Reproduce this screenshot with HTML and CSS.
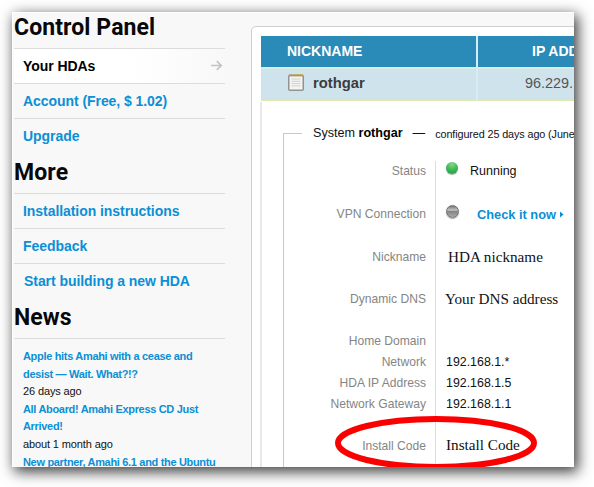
FILE: index.html
```html
<!DOCTYPE html>
<html lang="en">
<head>
<meta charset="utf-8">
<title>Control Panel</title>
<link rel="stylesheet" href="styles.css">
</head>
<body>
<div class="window">
  <aside class="sidebar">
    <h2>Control Panel</h2>
    <ul class="menu">
      <li class="current"><span>Your HDAs</span>
        <svg width="13" height="11" viewBox="0 0 13 11"><path d="M1 5.5h10M6.8 1.2l4.4 4.3-4.4 4.3" fill="none" stroke="#c3c3c3" stroke-width="1.7"/></svg></li>
      <li><a>Account (Free, $ 1.02)</a></li>
      <li><a>Upgrade</a></li>
    </ul>
    <h2 class="more">More</h2>
    <ul class="menu">
      <li><a>Installation instructions</a></li>
      <li><a>Feedback</a></li>
      <li class="start"><a>Start building a new HDA</a></li>
    </ul>
    <h2 class="more">News</h2>
    <div class="news">
      <a>Apple hits Amahi with a cease and<br>desist — Wait. What?!?</a>
      <p>26 days ago</p>
      <a>All Aboard! Amahi Express CD Just<br>Arrived!</a>
      <p>about 1 month ago</p>
      <a>New partner, Amahi 6.1 and the Ubuntu</a>
    </div>
  </aside>
  <main class="card">
    <div class="table">
      <div class="th name">NICKNAME</div><div class="th ip">IP ADDRESS</div>
      <div class="td name"><svg width="16" height="17" viewBox="0 0 16 17"><rect x=".75" y="1.5" width="14.5" height="14.7" rx="1" fill="#f4f4f2" stroke="#929292" stroke-width="1.5"/><path d="M1 1.3h14" stroke="#b89a30" stroke-width="2" stroke-dasharray="1.5 .6"/><path d="M3.5 5h9M3.5 7.3h9M3.5 9.6h9M3.5 11.9h9" stroke="#d0d0d0"/></svg><b>rothgar</b></div><div class="td ip">96.229.</div>
    </div>
    <div class="panel">
      <section class="system">
        <div class="legend"><i class="rule"></i><span>System <b>rothgar</b></span><span class="dash">—</span><small>configured 25 days ago (June</small></div>
        <dl>
          <dt>Status</dt><dd><i class="led green"></i><span class="running">Running</span></dd>
          <dt>VPN Connection</dt><dd><i class="led grey"></i><a class="check">Check it now<svg width="4" height="7" viewBox="0 0 4 7"><path d="M0 0.5L3.5 3.5 0 6.5z" fill="#0b8fd5"/></svg></a></dd>
          <dt>Nickname</dt><dd class="serif nick">HDA nickname</dd>
          <dt>Dynamic DNS</dt><dd class="serif dns">Your DNS address</dd>
          <dt>Home Domain</dt><dd></dd>
          <dt>Network</dt><dd class="addr">192.168.1.*</dd>
          <dt>HDA IP Address</dt><dd class="addr">192.168.1.5</dd>
          <dt>Network Gateway</dt><dd class="addr">192.168.1.1</dd>
          <dt>Install Code</dt><dd class="serif install">Install Code</dd>
        </dl>
      </section>
    </div>
  </main>
  <svg class="mark" width="204" height="56" viewBox="0 0 204 56"><ellipse cx="102" cy="28" rx="98" ry="24" fill="none" stroke="#fb0000" stroke-width="6"/></svg>
</div>
</body>
</html>
```
FILE: styles.css
```css
* { box-sizing: border-box; }
html, body { margin: 0; height: 100%; overflow: hidden; background: #fff; }
body { padding: 12px; font-family: "Liberation Sans", Arial, sans-serif; color: #111; }
svg { display: block; flex: none; }
.window {
  position: relative; display: flex; width: 562px; height: 455px; overflow: hidden;
  background: #f8f8f8; border-top: 1px solid #fff; border-left: 1px solid #fff;
  box-shadow: 3px 4px 13px 1px rgba(0,0,0,.75);
}
.sidebar { width: 238px; padding-left: 1px; flex: none; }
h2 {
  margin: -5px 0 0; height: 40px; padding-top: 4px;
  font: bold 23px/32px Roboto, sans-serif; letter-spacing: .1px; color: #080808;
}
h2.more { margin-top: 0; }
.menu { margin: 0; padding: 0; width: 211px; list-style: none; }
.menu li {
  display: flex; align-items: center; justify-content: space-between; height: 35px;
  padding: 0 2px 1px 9px; border-top: 1px solid #dcdcdc;
  font-size: 14px; font-weight: bold; letter-spacing: -.06px; white-space: nowrap;
}
.menu .start { padding-left: 10px; }
.menu .current { background: linear-gradient(90deg, #fff 55%, #f8f8f8); color: #000; }
a { color: #0b8fd5; font-weight: bold; }
.news {
  width: 211px; padding: 9px 0 0 9px; border-top: 1px solid #dcdcdc;
  font-size: 11px; line-height: 17.6px; white-space: nowrap;
}
.news a { display: block; letter-spacing: -.32px; }
.news p { margin: 0; letter-spacing: -.12px; }
.card {
  width: 400px; height: 460px; flex: none; margin-top: 13px; padding: 9px 0 0 8px;
  border: 1px solid #cfcfcf; border-radius: 5px; background: #fff;
}
.table { display: grid; grid-template-columns: 215px 240px; column-gap: 2px; background: #d8ecf3; margin-left: 1px; width: 400px; }
.th { height: 31px; background: #2a8ab8; color: #fff; font-size: 14px; font-weight: bold; line-height: 30px; white-space: nowrap; }
.th.name { padding-left: 26px; }
.th.ip { padding-left: 54px; }
.td { height: 34px; border-top: 2px solid #d9ede4; border-bottom: 1px solid #dfe9b0; background: #cfe3ec; font-size: 14.8px; line-height: 28px; color: #3c3c3c; }
.td.name { display: flex; align-items: center; gap: 9px; padding: 0 0 4px 27px; }
.td.ip { padding-left: 47px; font-size: 14.4px; color: #555; }
.panel { margin-top: 1px; padding: 31px 0 0 21px; height: 400px; border-left: 2px solid #e8e8e8; }
.system { height: 360px; border-left: 1px solid #c9c9c9; font-size: 12px; }
.legend { display: flex; height: 28px; line-height: 14px; white-space: nowrap; }
.legend span { margin-top: -7px; font-size: 12.6px; }
.legend b { color: #000; }
.legend .dash { margin-left: 10px; }
.legend small { margin: -6px 0 0 10px; font-size: 10.8px; letter-spacing: -.1px; }
.rule { width: 18px; height: 1px; margin-right: 11px; background: #c9c9c9; }
dl {
  display: grid; grid-template-columns: 152px 170px;
  grid-template-rows: 18px 43px 43px 42px 42px 21px 21px 21px 42px;
  margin: 0; padding-bottom: 24px; line-height: 16px; align-items: end;
  background: linear-gradient(#dcdcdc, #dcdcdc) 151px 0 / 1px 100% no-repeat;
}
dt { padding-right: 10px; text-align: right; font-size: 12.1px; color: #858585; }
dd { display: flex; margin: 0; padding-left: 10px; height: 16px; white-space: nowrap; }
.led { width: 12px; height: 12px; border-radius: 50%; flex: none; margin-top: -1px; box-shadow: 0 1px 1px #aaa; }
.green { background: radial-gradient(circle at 50% 20%, #88d982, #3cb755 50%, #219343); }
.grey { width: 13px; height: 13px; background: linear-gradient(#777, #c4c4c4 38%, #858585 50%, #aaa); border: 1px solid #707070; margin-top: -1px; }
.running { margin-left: 12px; font-size: 12.5px; }
.check { display: flex; align-items: center; gap: 4px; margin: 1px 0 0 18px; font-size: 12.8px; }
.addr { font-size: 12.4px; }
.serif { font-family: "Liberation Serif", serif; font-size: 15.2px; }
.nick { padding-left: 12px; }
.dns { padding-left: 9px; }
.install { margin-bottom: 1px; }
.mark { position: absolute; left: 321px; top: 402px; }
```
